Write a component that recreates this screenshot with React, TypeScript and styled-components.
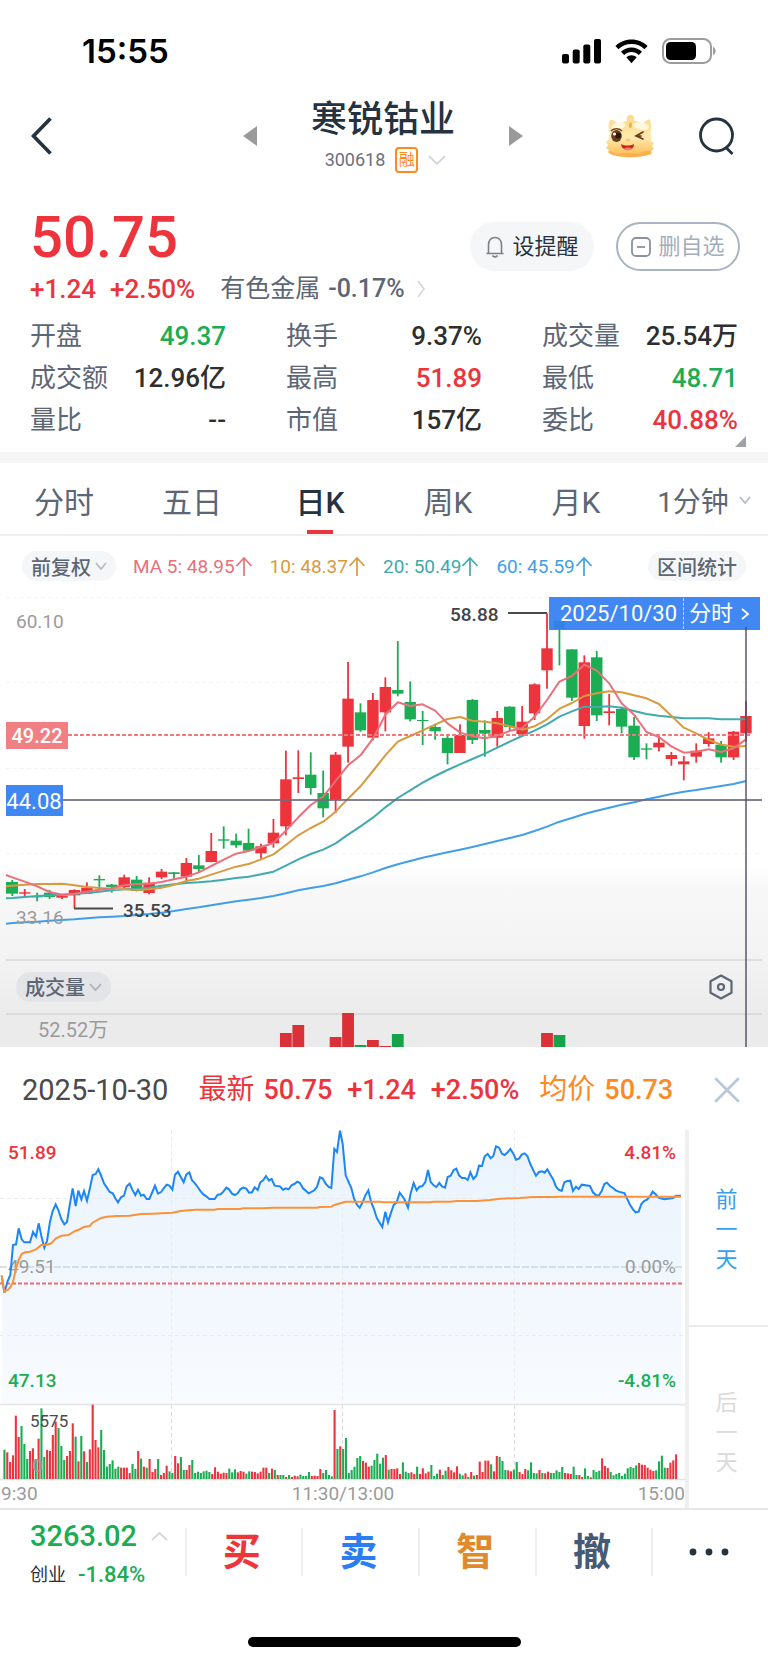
import React from 'react';
import styled, { createGlobalStyle } from 'styled-components';

const RED = '#ed333b';
const GREEN = '#1aad53';
const INK = '#25323f';
const SLATE = '#5c6675';
const MUTED = '#9b9b9b';
const SANS = "Roboto, 'Noto Sans CJK SC', sans-serif";

const tones = { up: RED, down: GREEN, plain: '#2e2e2e' };
type Tone = keyof typeof tones;

const GlobalStyle = createGlobalStyle`
  *, *::before, *::after { box-sizing: border-box; }
  body { margin: 0; background: #fff; color: ${INK}; font-family: ${SANS}; }
  button { margin: 0; padding: 0; border: 0; background: none; font: inherit; color: inherit; cursor: pointer; }
  dl, dt, dd, h1, p { margin: 0; }
  svg { display: block; flex: none; }
`;

/* ---------- page parts ---------- */

const Page = styled.div`
  width: 100%;
  overflow: hidden;
  white-space: nowrap;
`;

const StatusBar = styled.div`
  display: flex;
  align-items: center;
  justify-content: space-between;
  height: 96px;
  padding: 6px 52px 0 82px;
  font: 600 33px/40px Inter, sans-serif;
  color: #000;
`;

const StatusIcons = styled.div`
  display: flex;
  align-items: center;
  gap: 14px;
`;

const Header = styled.header`
  display: grid;
  grid-template-columns: 1fr auto 1fr;
  align-items: center;
  height: 80px;
  padding: 0 33px 0 31px;
`;

const StockSwitcher = styled.div`
  display: flex;
  align-items: center;
  gap: 54px;
`;

const StockTitle = styled.div`
  display: flex;
  flex-direction: column;
  align-items: center;
  gap: 4px;
`;

const StockName = styled.h1`
  font-size: 36px;
  font-weight: 500;
  line-height: 44px;
`;

const StockCode = styled.button`
  display: flex;
  align-items: center;
  gap: 10px;
  padding-left: 5px;
  font-size: 18px;
  line-height: 28px;
  color: #6c6f80;
`;

const MarginBadge = styled.span`
  width: 23px;
  height: 26px;
  border: 2px solid #ff8a1f;
  border-radius: 4px;
  font-size: 16px;
  line-height: 21px;
  text-align: center;
  color: #ff8a1f;
`;

const HeaderActions = styled.div`
  display: flex;
  align-items: center;
  justify-content: flex-end;
  gap: 44px;
`;

const Quote = styled.section`
  position: relative;
  padding: 31px 30px 11px;
`;

const PriceRow = styled.div`
  display: flex;
  justify-content: space-between;
  height: 64px;
`;

const Price = styled.p`
  font-size: 58px;
  font-weight: 500;
  line-height: 60px;
  color: ${RED};
`;

const PriceActions = styled.div`
  display: flex;
  align-items: flex-end;
  gap: 22px;
  margin-right: -2px;
`;

const PillButton = styled.button<{ $outlined?: boolean }>`
  display: flex;
  align-items: center;
  justify-content: center;
  gap: 7px;
  width: 124px;
  height: 49px;
  border-radius: 25px;
  border: 2px solid ${(p) => (p.$outlined ? '#a9b4c1' : '#f5f6f8')};
  background: ${(p) => (p.$outlined ? '#fff' : '#f5f6f8')};
  color: ${(p) => (p.$outlined ? '#a4adba' : INK)};
  font-size: 22px;
  line-height: 32px;
`;

const ChangeRow = styled.div`
  display: flex;
  align-items: center;
  margin-top: 2px;
  font-size: 26px;
  line-height: 32px;
  color: ${RED};
`;

const Change = styled.span`
  margin-right: 14px;
  font-weight: 500;
`;

const Sector = styled.a`
  display: flex;
  align-items: center;
  gap: 8px;
  margin-left: 11px;
  color: ${SLATE};
  font-size: 25px;
  text-decoration: none;
`;

const SectorChange = styled.span`
  margin-right: 4px;
  font-weight: 500;
`;

const Stats = styled.dl`
  display: grid;
  grid-template-columns: repeat(3, 1fr);
  column-gap: 60px;
  margin-top: 10px;
`;

const Stat = styled.div`
  display: flex;
  justify-content: space-between;
  font-size: 26px;
  line-height: 42px;
`;

const StatLabel = styled.dt`
  color: ${SLATE};
`;

const StatValue = styled.dd<{ $tone: Tone }>`
  font-weight: 500;
  color: ${(p) => tones[p.$tone]};
`;

const ExpandCorner = styled.button`
  position: absolute;
  right: 22px;
  bottom: 5px;
`;

const Band = styled.div`
  height: 11px;
  background: #f5f5f5;
`;

const Tabs = styled.nav`
  display: grid;
  grid-template-columns: repeat(6, 1fr);
  height: 73px;
  border-bottom: 2px solid #eeeff1;
`;

const Tab = styled.button<{ $active?: boolean; $small?: boolean }>`
  position: relative;
  display: flex;
  align-items: center;
  justify-content: center;
  gap: 10px;
  padding-top: 2px;
  font-size: ${(p) => (p.$small ? 28 : 30)}px;
  font-weight: ${(p) => (p.$active ? 500 : 400)};
  color: ${(p) => (p.$active ? INK : SLATE)};

  &::after {
    content: '';
    display: ${(p) => (p.$active ? 'block' : 'none')};
    position: absolute;
    bottom: 0;
    left: calc(50% - 13px);
    width: 26px;
    height: 4px;
    background: ${RED};
  }
`;

const AverageRow = styled.div`
  display: flex;
  align-items: center;
  height: 60px;
  padding: 0 22px;
  font-size: 19px;
`;

const Chip = styled.button<{ $shaded?: boolean }>`
  display: flex;
  align-items: center;
  gap: 4px;
  height: 30px;
  padding: 0 9px;
  border-radius: 15px;
  background: ${(p) => (p.$shaded ? '#e2e4e7' : '#f4f6f8')};
  color: ${SLATE};
  font-size: 20px;
  font-weight: 500;
`;

const Average = styled.span<{ $color: string }>`
  display: flex;
  align-items: center;
  margin-left: 17px;
  color: ${(p) => p.$color};
`;

const Spacer = styled.div`
  flex: 1;
`;

const DailyPanel = styled.section`
  position: relative;
  background: linear-gradient(#fff 0, #fff 270px, #f8f8f8 290px, #f3f3f3 360px, #ebebeb 420px);
`;

const ChartSvg = styled.svg`
  width: 100%;
  height: auto;
  font-family: ${SANS};
`;

const VolumeHeader = styled.div`
  display: flex;
  align-items: center;
  justify-content: space-between;
  height: 56px;
  margin: 0 6px;
  padding: 0 29px 1px 10px;
  border-top: 2px solid #dedede;
  border-bottom: 2px solid #dbdbdb;
`;

const DateTag = styled.button`
  position: absolute;
  top: 1px;
  right: 8px;
  display: flex;
  align-items: center;
  width: 211px;
  height: 33px;
  padding: 0 10px 0 11px;
  background: rgba(51, 127, 242, 0.93);
  color: #fff;
  font-size: 22px;
`;

const TagLink = styled.span`
  display: flex;
  align-items: center;
  justify-content: space-between;
  flex: 1;
  margin-left: 6px;
  padding-left: 5px;
  border-left: 1px dashed #c5dafb;
  line-height: 31px;
`;

const Crosshair = styled.div`
  position: absolute;
  top: 31px;
  bottom: 0;
  right: 21px;
  width: 2px;
  background: rgba(80, 74, 100, 0.7);
`;

const DayHead = styled.div`
  display: flex;
  align-items: center;
  gap: 20px;
  height: 83px;
  padding: 2px 28px 0 22px;
  font-size: 27px;
  font-weight: 500;
  line-height: 40px;
`;

const DayDate = styled.time`
  margin-right: 10px;
  font-size: 29px;
  font-weight: 400;
  color: #4a4a4a;
`;

const Figures = styled.p<{ $color: string }>`
  display: flex;
  align-items: baseline;
  gap: 15px;
  color: ${(p) => p.$color};
`;

const FigureLabel = styled.span`
  margin-right: 9px;
  font-size: 28px;
  font-weight: 400;
`;

const CloseButton = styled.button`
  margin-left: auto;
`;

const DayBody = styled.section`
  display: grid;
  grid-template-columns: 685fr 83fr;
  border-bottom: 2px solid #e6e6e6;
`;

const DayNav = styled.div`
  display: grid;
  grid-template-rows: 197px 1fr;
  border-left: 4px solid #eef0f0;
`;

const DayStep = styled.button`
  display: flex;
  flex-direction: column;
  align-items: center;
  justify-content: center;
  padding: 4px 4px 0 0;
  border-bottom: 2px solid #ececec;
  font-size: 22px;
  line-height: 30px;
  color: #35a0ee;

  &:disabled {
    padding-top: 30px;
    border-bottom: 0;
    color: #dadada;
  }
`;

const TradeBar = styled.footer`
  display: grid;
  grid-template-columns: 185fr repeat(5, 117fr);
  align-items: center;
  height: 84px;
`;

const IndexButton = styled.button`
  display: grid;
  grid-template-columns: auto auto;
  justify-content: start;
  align-items: center;
  column-gap: 14px;
  padding: 4px 0 0 30px;
  text-align: left;
  color: ${GREEN};
`;

const IndexValue = styled.span`
  font-size: 29px;
  font-weight: 500;
  line-height: 42px;
`;

const IndexDetail = styled.span`
  display: flex;
  grid-column: span 2;
  align-items: center;
  gap: 12px;
  font-size: 22px;
  font-weight: 500;
  line-height: 36px;
`;

const IndexName = styled.span`
  font-size: 18px;
  font-weight: 400;
  color: ${INK};
`;

const TradeButton = styled.button<{ $color: string }>`
  display: flex;
  align-items: center;
  justify-content: center;
  height: 48px;
  padding-right: 4px;
  border-left: 2px solid #eeeff0;
  color: ${(p) => p.$color};
  font-size: 38px;
  font-weight: 700;
  line-height: 44px;
`;

const HomeArea = styled.div`
  display: flex;
  justify-content: center;
  padding: 43px 0 17px;
`;

const HomeIndicator = styled.div`
  width: 273px;
  height: 10px;
  border-radius: 5px;
  background: #000;
`;

/* ---------- icons ---------- */

const Caret = ({ w, h, color, up }: { w: number; h: number; color: string; up?: boolean }) => (
  <svg width={w} height={h} viewBox={`0 0 ${w} ${h}`} fill="none" stroke={color} strokeWidth="1.8">
    <path d={up ? `M1 ${h - 1}L${w / 2} 1L${w - 1} ${h - 1}` : `M1 1L${w / 2} ${h - 1}L${w - 1} 1`} />
  </svg>
);

const Chevron = ({ w, h, color, stroke }: { w: number; h: number; color: string; stroke: number }) => (
  <svg width={w} height={h} viewBox={`0 0 ${w} ${h}`} fill="none" stroke={color} strokeWidth={stroke}>
    <path d={`M1 1L${w - 2} ${h / 2}L1 ${h - 1}`} />
  </svg>
);

const ArrowUp = () => (
  <svg width="18" height="20" viewBox="0 0 18 20" fill="none" stroke="currentColor" strokeWidth="1.7">
    <path d="M9 20V2M1.500 10L9 2L16.500 10" />
  </svg>
);

const Signal = () => (
  <svg width="39" height="25" viewBox="0 0 39 25">
    <rect x="0" y="15" width="7" height="9.500" rx="2" />
    <rect x="10.700" y="10.500" width="7" height="14" rx="2" />
    <rect x="21.300" y="5.500" width="7" height="19" rx="2" />
    <rect x="32" y="0" width="7" height="24.500" rx="2" />
  </svg>
);

const Wifi = () => (
  <svg width="33" height="25" viewBox="0 0 33 25">
    <path d="M16.500 0.500C22.800 .5 28.500 3 32.600 6.900L29.500 10.200C26.200 6.900 21.500 5 16.500 5S6.800 6.900 3.500 10.200L.4 6.900C4.500 3 10.200 .5 16.500 .5Z" />
    <path d="M16.500 8.500C20.600 8.500 24.300 10.100 27 12.800L23.800 16.100C21.900 14.200 19.300 13 16.500 13S11.100 14.200 9.200 16.100L6 12.800C8.700 10.100 12.400 8.500 16.500 8.500Z" />
    <path d="M16.500 16.300C18.500 16.300 20.300 17.100 21.700 18.300L16.500 24.300L11.300 18.300C12.700 17.100 14.500 16.300 16.500 16.300Z" />
  </svg>
);

const Battery = () => (
  <svg width="54" height="26" viewBox="0 0 54 26">
    <rect x="1" y="1" width="48" height="24" rx="7.500" fill="none" stroke="#9c9c9c" strokeWidth="2" />
    <rect x="4" y="4" width="30" height="18" rx="4.500" />
    <path d="M51 9C54.400 10 54.400 16 51 17Z" fill="#9c9c9c" />
  </svg>
);

const Mascot = () => (
  <svg width="50" height="44" viewBox="0 0 50 44">
    <defs>
      <linearGradient id="skin" x1="0" y1="0" x2="0" y2="1">
        <stop offset="0" stopColor="#fbd987" />
        <stop offset=".55" stopColor="#ffe9ae" />
        <stop offset="1" stopColor="#fcb94c" />
      </linearGradient>
    </defs>
    <path
      d="M5 6C9 6 12 8 14 11C17 8 20 7 22 7C21 3 23 1 25.500 1C28 1 30 3 29 7C33 7 35 8 37 10C39 8 41 7 44 5C47 9 47 15 45 19C47 22 47 24 46 27L49 29L47 32L49 35L46 37L47 40C35 44 15 44 6 40L3 38L4 36L1 34L3 31L1 28L4 25C3 23 4 21 5 19C3 15 3 10 5 6Z"
      fill="url(#skin)"
    />
    <path d="M3 38C8 36 9 41 13 40C20 38 31 41 37 38C40 36 44 38 47 36L45 40C33 45 14 44 5 40Z" fill="#f7a63c" opacity=".6" />
    <ellipse cx="13.500" cy="12" rx="7" ry="3.600" fill="#fff8df" transform="rotate(-12 13.500 12)" />
    <ellipse cx="36" cy="12" rx="8" ry="3.600" fill="#fff8df" transform="rotate(10 36 12)" />
    <path d="M24 10C25 7 27 8 27 11C27 14 25 15 24 13Z" fill="#f0b048" />
    <ellipse cx="11.500" cy="22" rx="5.300" ry="6" fill="#6b3d1f" />
    <circle cx="13" cy="21.500" r="3" fill="#2e1809" />
    <circle cx="9.500" cy="20" r="1.600" fill="#fff" />
    <path d="M6 17C9 14 14 14 17 17" fill="none" stroke="#7b4a25" strokeWidth="1.500" />
    <path d="M38 18L31 22L38 25M31 22H36" fill="none" stroke="#6b3d1f" strokeWidth="1.700" strokeLinecap="round" />
    <ellipse cx="23" cy="26" rx="2.500" ry="1.500" fill="#fbc96a" />
    <path d="M16 30C20 32 25 32 29 30C29 38 17 38 16 30Z" fill="#c4251c" />
    <path d="M19 34.500C21 33 25 33 27 34.500C25 37 21 37 19 34.500Z" fill="#ff7a6d" />
  </svg>
);

const SearchIcon = () => (
  <svg width="36" height="38" viewBox="0 0 36 38" fill="none" stroke={INK} strokeWidth="2.800">
    <circle cx="17.500" cy="18" r="16" />
    <path d="M26.500 30L33.500 37" />
  </svg>
);

const Bell = () => (
  <svg width="20" height="22" viewBox="0 0 20 22" fill="none" stroke="#7b8087" strokeWidth="1.600">
    <path d="M1.500 17.500H18.500M3.500 17.500V9C3.500 4.500 6 1.500 10 1.500S16.500 4.500 16.500 9V17.500M7.500 19.500C8.500 21.300 11.500 21.300 12.500 19.500" />
  </svg>
);

const MinusBox = () => (
  <svg width="20" height="20" viewBox="0 0 20 20" fill="none" stroke="#8b929c" strokeWidth="1.800">
    <rect x="1" y="1" width="18" height="18" rx="4" />
    <path d="M6 10H14" />
  </svg>
);

const Hexagon = () => (
  <svg width="24" height="26" viewBox="0 0 24 26" fill="none" stroke={SLATE} strokeWidth="2.200" strokeLinejoin="round">
    <path d="M12 1.500L22.500 7.300V18.700L12 24.500L1.500 18.700V7.300Z" />
    <circle cx="12" cy="13" r="3" />
  </svg>
);

const Triangle = ({ flip }: { flip?: boolean }) => (
  <svg width="14" height="20" viewBox="0 0 14 20" fill="#9a9a9a">
    <path d={flip ? 'M0 0L14 10L0 20Z' : 'M14 0L0 10L14 20Z'} />
  </svg>
);

/* ---------- daily candles: colour, high, body top, body bottom, low (thirds of a unit below y=590) ---------- */

type Candle = [string, number, number, number, number];
const candles: Candle[] = [
  ['g', 870, 876, 911, 918], ['r', 897, 907, 911, 921], ['g', 908, 919, 922, 934], ['g', 900, 908, 921, 927],
  ['r', 912, 917, 923, 927], ['r', 898, 900, 916, 955], ['r', 877, 893, 911, 912], ['g', 856, 867, 871, 892],
  ['g', 882, 884, 891, 908], ['r', 854, 862, 892, 894], ['g', 858, 869, 903, 904], ['r', 862, 878, 909, 913],
  ['r', 837, 845, 862, 867], ['g', 846, 847, 852, 866], ['r', 804, 819, 860, 872], ['g', 795, 826, 837, 847],
  ['r', 729, 783, 816, 817], ['g', 709, 748, 752, 776], ['g', 731, 752, 766, 773], ['g', 716, 759, 782, 784],
  ['r', 761, 769, 790, 806], ['r', 687, 728, 760, 773], ['r', 482, 568, 709, 736], ['r', 481, 562, 567, 609],
  ['g', 487, 554, 594, 614], ['g', 542, 609, 655, 682], ['r', 486, 494, 629, 669], ['r', 216, 326, 470, 518],
  ['g', 340, 367, 421, 425], ['r', 309, 330, 443, 451], ['r', 262, 291, 367, 424], ['g', 153, 300, 311, 319],
  ['g', 274, 336, 388, 394], ['g', 363, 390, 393, 465], ['g', 403, 411, 424, 449], ['g', 437, 444, 489, 523],
  ['r', 403, 435, 489, 489], ['g', 327, 330, 450, 462], ['g', 391, 420, 431, 500], ['r', 363, 384, 443, 470],
  ['g', 349, 350, 411, 420], ['r', 348, 395, 432, 436], ['r', 280, 283, 370, 390], ['r', 70, 175, 241, 296],
  ['g', 92, 92, 116, 226], ['g', 178, 178, 323, 333], ['r', 196, 217, 408, 446], ['g', 183, 202, 376, 393],
  ['r', 312, 364, 369, 406], ['g', 350, 357, 410, 430], ['g', 381, 407, 502, 510], ['g', 460, 475, 479, 508],
  ['r', 437, 458, 472, 484], ['r', 486, 495, 507, 527], ['r', 498, 514, 523, 571], ['r', 460, 482, 500, 518],
  ['r', 426, 445, 462, 470], ['g', 453, 464, 502, 518], ['r', 423, 425, 502, 510], ['r', 333, 378, 430, 455],
];

const averages = [
  {
    color: '#e8717a', label: 'MA 5: 48.95', start: 855,
    points: [862, 875, 889, 906, 914, 911, 905, 899, 895, 886, 882, 881, 876, 868, 860, 847, 828, 809, 791, 783, 771, 759, 722, 682, 645, 620, 573, 526, 496, 446, 374, 337, 348, 343, 362, 400, 427, 439, 445, 437, 423, 414, 380, 330, 275, 258, 224, 242, 280, 340, 374, 426, 441, 469, 488, 485, 478, 486, 475, 448],
  },
  {
    color: '#d99a3e', label: '10: 48.37', start: 889,
    points: [887, 884, 882, 882, 881, 886, 891, 894, 897, 898, 900, 898, 893, 884, 873, 866, 854, 842, 830, 822, 808, 793, 765, 736, 714, 695, 665, 626, 589, 543, 496, 455, 438, 421, 404, 387, 381, 392, 395, 400, 409, 419, 409, 388, 356, 339, 318, 310, 304, 307, 316, 325, 342, 377, 413, 430, 450, 464, 470, 468],
  },
  {
    color: '#40aaae', label: '20: 50.49', start: 925,
    points: [924, 921, 918, 916, 914, 912, 909, 905, 901, 898, 896, 893, 887, 883, 879, 877, 874, 869, 864, 860, 853, 845, 827, 808, 792, 779, 760, 734, 709, 683, 652, 624, 601, 578, 558, 540, 523, 507, 491, 473, 455, 438, 422, 403, 380, 364, 350, 351, 349, 353, 363, 372, 377, 381, 385, 385, 385, 388, 388, 388],
  },
  {
    color: '#419fe8', label: '60: 45.59', start: 1001,
    points: [999, 997, 995, 992, 990, 988, 985, 982, 980, 978, 975, 972, 968, 963, 957, 952, 946, 940, 934, 929, 924, 918, 910, 901, 894, 888, 880, 869, 859, 847, 834, 823, 813, 803, 795, 787, 779, 771, 762, 753, 744, 735, 723, 710, 695, 684, 672, 662, 653, 644, 637, 628, 620, 612, 605, 600, 594, 588, 582, 573],
  },
];

const dayX = (i: number) => 12.3 + 12.435 * i;
const dayY = (v: number) => 590 + v / 3;
const tint = (c: string) => (c === 'r' ? RED : GREEN);

const DailyChart = () => (
  <ChartSvg viewBox="0 596 768 363" fontSize="19">
    {[597, 682, 768, 853].map((y) => (
      <path key={y} d={`M6 ${y}.5H760`} stroke="#f4f4f4" strokeDasharray="4 3" />
    ))}
    {candles.map(([c, high, top, bottom, low], i) => (
      <g key={i} fill={tint(c)}>
        <rect x={dayX(i) - 0.9} y={dayY(high)} width="1.8" height={(low - high) / 3} />
        <rect x={i ? dayX(i) - 5.7 : 6} y={dayY(top)} width={i ? 11.4 : 12} height={(bottom - top) / 3} />
      </g>
    ))}
    {[...averages].reverse().map((m) => (
      <polyline
        key={m.label}
        points={`6,${dayY(m.start)} ` + m.points.map((v, i) => `${dayX(i)},${dayY(v)}`).join(' ')}
        fill="none"
        stroke={m.color}
        strokeWidth="2"
        strokeLinejoin="round"
      />
    ))}
    <path d="M68 735H750" stroke="#f0797d" strokeWidth="2" strokeDasharray="4 2" />
    <path d="M63 800H762" stroke="#6f6a80" strokeWidth="1.8" opacity=".85" />
    <path d="M74 908.500H113M508 613H547" stroke="#4a4a4a" strokeWidth="2" />
    <text x="16" y="628" fill={MUTED}>60.10</text>
    <text x="16" y="924" fill={MUTED}>33.16</text>
    <text x="450" y="621" fill="#444" fontWeight="500">58.88</text>
    <text x="123" y="917" fill="#444" fontWeight="500">35.53</text>
    <rect x="6" y="722" width="62" height="27" fill="#f08083" />
    <text x="37" y="743" fill="#fff" fontSize="20" fontWeight="500" textAnchor="middle">49.22</text>
    <rect x="6" y="785" width="57" height="31" fill="#3f87f2" />
    <text x="34" y="809" fill="#fff" fontSize="22" textAnchor="middle">44.08</text>
  </ChartSvg>
);

const dayVolumes: [number, string, number][] = [
  [22, 'r', 1033], [23, 'r', 1025], [26, 'r', 1037], [27, 'r', 1013], [28, 'g', 1045],
  [29, 'r', 1040], [30, 'r', 1046], [31, 'g', 1034], [43, 'r', 1033], [44, 'g', 1035],
];

const DailyVolume = () => (
  <ChartSvg viewBox="0 1015 768 32" fontSize="20" overflow="visible">
    {dayVolumes.map(([i, c, top]) => (
      <rect key={i} x={dayX(i) - 5.9} y={top} width="11.8" height={1047 - top} fill={c === 'r' ? '#da3038' : '#17a34c'} />
    ))}
    <text x="38" y="1037" fill={MUTED}>52.52万</text>
  </ChartSvg>
);

/* ---------- intraday series: x,y pairs in thirds of a unit, y counted from 1110 ---------- */

const priceLine =
  '5,497 13,548 23,513 31,495 39,405 48,403 56,355 65,388 73,397 90,397 99,366 108,380 116,340 124,377 133,413 141,393 150,335 158,303 167,283 175,300 184,327 193,343 201,336 210,280 218,235 227,288 235,242 244,268 252,243 261,272 269,238 278,195 287,192 295,178 303,196 312,220 320,232 329,246 338,250 346,265 354,277 363,262 372,257 380,229 389,221 397,239 406,255 414,239 423,257 431,254 440,267 448,267 457,246 465,227 474,251 483,246 491,235 500,224 508,227 517,239 525,194 534,185 542,200 551,217 559,193 568,187 576,211 585,220 593,231 602,244 611,254 619,259 628,267 644,267 653,254 662,253 670,245 679,233 687,238 696,251 704,255 713,250 721,238 730,233 739,236 747,248 756,247 764,232 773,240 781,217 790,210 798,198 807,212 815,207 824,227 840,229 849,239 858,235 866,238 875,225 883,222 892,215 900,219 909,235 926,250 943,241 951,230 960,202 968,205 977,221 986,231 994,234 1003,117 1011,126 1020,62 1028,102 1037,196 1054,234 1062,265 1071,284 1079,293 1088,276 1096,256 1105,241 1113,275 1122,297 1130,323 1139,338 1147,351 1156,305 1164,337 1173,308 1181,285 1190,277 1199,248 1213,267 1224,293 1232,250 1241,219 1250,241 1258,230 1267,228 1276,216 1284,180 1292,216 1301,226 1309,231 1318,219 1326,229 1335,233 1343,201 1352,197 1361,180 1369,176 1377,196 1386,204 1395,204 1403,210 1411,187 1420,207 1429,197 1437,167 1446,168 1454,139 1463,132 1472,145 1480,138 1488,109 1497,113 1506,131 1514,135 1523,127 1531,117 1540,131 1548,149 1557,146 1565,134 1574,130 1582,138 1591,162 1600,181 1608,197 1617,186 1626,184 1634,188 1642,178 1651,194 1659,207 1668,230 1676,239 1685,243 1693,217 1702,213 1711,212 1719,243 1728,230 1736,237 1745,224 1770,228 1779,247 1787,255 1796,257 1805,243 1813,222 1821,218 1830,228 1839,234 1847,241 1856,245 1873,249 1881,265 1890,284 1899,298 1907,307 1916,305 1924,282 1932,273 1941,269 1950,259 1958,245 1967,253 1976,263 1993,268 2019,264 2028,257 2043,257';

const averageLine =
  '5,497 13,545 23,540 31,532 39,516 48,475 56,450 65,432 75,427 90,425 108,418 124,405 141,404 154,400 167,386 184,377 205,375 227,362 235,360 252,351 269,348 278,338 303,324 320,320 350,318 389,317 423,312 457,311 517,308 542,303 585,299 644,299 653,297 720,297 730,295 785,295 820,293 950,293 960,291 994,290 1003,285 1037,275 1140,275 1150,277 1290,277 1300,275 1350,275 1370,273 1430,273 1470,270 1500,266 1560,264 1600,261 1660,261 1680,260 2043,260';

const minuteVolumes =
  'g88 r80 r51 r71 r190 r126 g159 g105 g60 r84 r92 g60 r121 g212 g66 r87 r84 r132 r172 g153 g99 g57 r69 r84 r167 g127 r53 g129 r83 g51 r89 r223 r117 r95 g147 g87 g37 g45 g56 g31 g37 r34 r34 r34 r18 g45 g30 r84 g61 r37 g34 r60 r21 r30 g60 r12 r18 r40 g23 g18 r69 r47 g66 g27 r27 r42 g57 g18 g22 g18 g23 g25 g21 r15 r35 r22 r16 r19 r18 g31 g20 g29 r20 r24 r22 g16 g23 r22 r21 r17 r22 r34 r34 g18 r31 g27 r12 g12 g12 r6 g12 r6 r10 r8 g13 g9 g9 g21 r9 r10 r9 r30 g18 g27 g12 g8 r207 g90 r98 g90 g123 g18 g27 g37 g63 g69 r54 r49 r37 g40 g57 g76 g46 g64 r72 g28 r30 r30 r32 r15 g50 g22 g18 r20 r15 g37 r15 r32 r17 r22 g42 g9 g16 r28 g12 g25 r36 r26 r20 r38 g16 g11 r17 g6 r21 g10 r12 r52 r21 r55 r55 g44 r23 r69 g66 g54 g27 r26 r23 g28 g51 r21 r15 r30 g26 g50 g18 g17 r27 g18 r17 r22 g18 g18 g26 g21 g36 r18 r17 r15 g37 g12 r12 r6 g32 g9 r5 g27 g21 g25 r62 r39 r33 g21 g11 g15 g18 g9 g16 g32 g36 g33 g41 r48 r43 r42 r34 r28 r24 g26 g53 g70 g34 r33 r49 r56 r74'.split(' ');

const toPoints = (series: string) =>
  series
    .split(' ')
    .map((pair) => pair.split(',').map(Number))
    .map(([x, y]) => `${(x / 3).toFixed(2)},${(1110 + y / 3).toFixed(2)}`)
    .join(' ');

const IntradayChart = () => (
  <ChartSvg viewBox="0 1130 685 378" fontSize="19">
    <defs>
      <linearGradient id="area" x1="0" y1="0" x2="0" y2="1">
        <stop offset="0" stopColor="#e9f3fd" />
        <stop offset=".45" stopColor="#f0f6fd" />
        <stop offset="1" stopColor="#f8fbff" />
      </linearGradient>
    </defs>
    <polygon points={`2,1404 ${toPoints(priceLine)} 681,1404`} fill="url(#area)" />
    <path d="M0 1198.500H683M0 1335.500H683M171.500 1130V1404M342.500 1130V1404M514.500 1130V1404" stroke="#e9edf0" strokeDasharray="4 3" />
    <path d="M171.500 1405V1479M342.500 1405V1479M514.500 1405V1479" stroke="#dcdcdc" strokeDasharray="4 3" />
    <path d="M0 1267H683" stroke="#cbd5de" strokeWidth="1.600" strokeDasharray="7 2" />
    <path d="M0 1283.500H683" stroke="#f0696f" strokeWidth="2" strokeDasharray="4 2" />
    <path d="M0 1404.500H685M0 1479.500H685" stroke="#e4e4e4" strokeWidth="1.500" />
    {minuteVolumes.map((v, i) => {
      const h = Number(v.slice(1)) / 3;
      return <rect key={i} x={3.4 + 2.846 * i} y={1479 - h} width="2.1" height={h} fill={tint(v[0])} />;
    })}
    <g fill={MUTED}>
      <text x="8" y="1273">49.51</text>
      <text x="676" y="1273" textAnchor="end">0.00%</text>
      <text x="1" y="1500">9:30</text>
      <text x="343" y="1500" textAnchor="middle">11:30/13:00</text>
      <text x="685" y="1500" textAnchor="end">15:00</text>
      <text x="32" y="1472">0</text>
    </g>
    <text x="30" y="1427" fontSize="17" fill="#4a4a4a">5575</text>
    <polyline points={toPoints(priceLine)} fill="none" stroke="#1b86f5" strokeWidth="2" />
    <polyline points={toPoints(averageLine)} fill="none" stroke="#fb923a" strokeWidth="2" />
    <g fontWeight="500">
      <text x="8" y="1159" fill={RED}>51.89</text>
      <text x="676" y="1159" fill={RED} textAnchor="end">4.81%</text>
      <text x="8" y="1387" fill={GREEN}>47.13</text>
      <text x="676" y="1387" fill={GREEN} textAnchor="end">-4.81%</text>
    </g>
  </ChartSvg>
);

/* ---------- page ---------- */

const stats: [string, string, Tone][] = [
  ['开盘', '49.37', 'down'], ['换手', '9.37%', 'plain'], ['成交量', '25.54万', 'plain'],
  ['成交额', '12.96亿', 'plain'], ['最高', '51.89', 'up'], ['最低', '48.71', 'down'],
  ['量比', '--', 'plain'], ['市值', '157亿', 'plain'], ['委比', '40.88%', 'up'],
];

const trades: [string, string][] = [
  ['买', '#ec3638'], ['卖', '#2a7df3'], ['智', '#e08a2c'], ['撤', '#475a75'],
];

export default function App() {
  return (
    <Page>
      <GlobalStyle />
      <StatusBar>
        <span>15:55</span>
        <StatusIcons>
          <Signal />
          <Wifi />
          <Battery />
        </StatusIcons>
      </StatusBar>

      <Header>
        <button aria-label="返回">
          <svg width="22" height="38" viewBox="0 0 22 38" fill="none" stroke={INK} strokeWidth="3.600">
            <path d="M19.500 1.500L2.500 19L19.500 36.500" />
          </svg>
        </button>
        <StockSwitcher>
          <button aria-label="上一只"><Triangle /></button>
          <StockTitle>
            <StockName>寒锐钴业</StockName>
            <StockCode>
              300618
              <MarginBadge>融</MarginBadge>
              <Caret w={18} h={10} color="#d3d7dd" />
            </StockCode>
          </StockTitle>
          <button aria-label="下一只"><Triangle flip /></button>
        </StockSwitcher>
        <HeaderActions>
          <button aria-label="助手"><Mascot /></button>
          <button aria-label="搜索"><SearchIcon /></button>
        </HeaderActions>
      </Header>

      <Quote>
        <PriceRow>
          <Price>50.75</Price>
          <PriceActions>
            <PillButton><Bell />设提醒</PillButton>
            <PillButton $outlined><MinusBox />删自选</PillButton>
          </PriceActions>
        </PriceRow>
        <ChangeRow>
          <Change>+1.24</Change>
          <Change>+2.50%</Change>
          <Sector href="#sector">
            <span>有色金属</span>
            <SectorChange>-0.17%</SectorChange>
            <Chevron w={9} h={18} color="#d3d7dd" stroke={1.6} />
          </Sector>
        </ChangeRow>
        <Stats>
          {stats.map(([label, value, tone]) => (
            <Stat key={label}>
              <StatLabel>{label}</StatLabel>
              <StatValue $tone={tone}>{value}</StatValue>
            </Stat>
          ))}
        </Stats>
        <ExpandCorner aria-label="展开">
          <svg width="11" height="11" viewBox="0 0 11 11" fill="#9ea2a8"><path d="M11 0V11H0Z" /></svg>
        </ExpandCorner>
      </Quote>
      <Band />

      <Tabs>
        <Tab>分时</Tab>
        <Tab>五日</Tab>
        <Tab $active>日K</Tab>
        <Tab>周K</Tab>
        <Tab>月K</Tab>
        <Tab $small>1分钟<Caret w={12} h={8} color="#b4bcc6" /></Tab>
      </Tabs>

      <AverageRow>
        <Chip>前复权<Caret w={12} h={8} color="#b4bcc6" /></Chip>
        {averages.map((m) => (
          <Average key={m.label} $color={m.color}>{m.label}<ArrowUp /></Average>
        ))}
        <Spacer />
        <Chip>区间统计</Chip>
      </AverageRow>

      <DailyPanel>
        <DailyChart />
        <VolumeHeader>
          <Chip $shaded>成交量<Caret w={13} h={8} color="#aab2bc" /></Chip>
          <button aria-label="指标设置"><Hexagon /></button>
        </VolumeHeader>
        <DailyVolume />
        <DateTag>
          2025/10/30
          <TagLink>分时<Chevron w={9} h={12} color="#fff" stroke={1.8} /></TagLink>
        </DateTag>
        <Crosshair />
      </DailyPanel>

      <DayHead>
        <DayDate>2025-10-30</DayDate>
        <Figures $color={RED}>
          <span><FigureLabel>最新</FigureLabel>50.75</span>
          <span>+1.24</span>
          <span>+2.50%</span>
        </Figures>
        <Figures $color="#fb8a26">
          <span><FigureLabel>均价</FigureLabel>50.73</span>
        </Figures>
        <CloseButton aria-label="关闭">
          <svg width="26" height="26" viewBox="0 0 26 26" stroke="#b9c7d6" strokeWidth="2.800" strokeLinecap="round">
            <path d="M2 2L24 24M24 2L2 24" />
          </svg>
        </CloseButton>
      </DayHead>

      <DayBody>
        <IntradayChart />
        <DayNav>
          <DayStep aria-label="前一天"><span>前</span><span>一</span><span>天</span></DayStep>
          <DayStep disabled aria-label="后一天"><span>后</span><span>一</span><span>天</span></DayStep>
        </DayNav>
      </DayBody>

      <TradeBar>
        <IndexButton>
          <IndexValue>3263.02</IndexValue>
          <Caret w={17} h={9} color="#d3d7dd" up />
          <IndexDetail><IndexName>创业</IndexName>-1.84%</IndexDetail>
        </IndexButton>
        {trades.map(([label, color]) => (
          <TradeButton key={label} $color={color}>{label}</TradeButton>
        ))}
        <TradeButton $color={INK} aria-label="更多">
          <svg width="40" height="8" viewBox="0 0 40 8" fill="currentColor">
            <circle cx="4" cy="4" r="3.400" />
            <circle cx="20" cy="4" r="3.400" />
            <circle cx="36" cy="4" r="3.400" />
          </svg>
        </TradeButton>
      </TradeBar>

      <HomeArea>
        <HomeIndicator />
      </HomeArea>
    </Page>
  );
}
